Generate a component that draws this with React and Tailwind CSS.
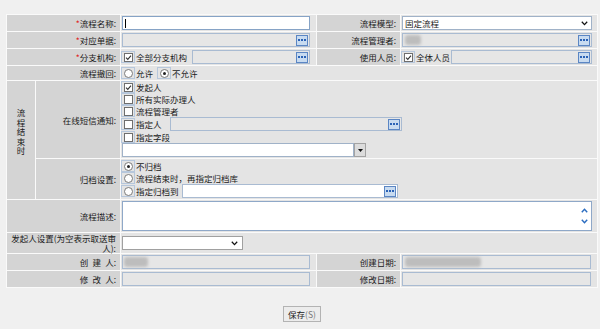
import React from "react";

const Chk = ({ checked }) => (
  <span className="flex h-[12px] w-[14px] shrink-0 items-center justify-center border border-[#b6c7dc]">
    <span className="flex h-[9px] w-[9px] items-center justify-center border border-[#6e6e6e] bg-white">
      {checked && (
        <svg width="7" height="7" viewBox="0 0 7 7">
          <path d="M1 3.6 L2.8 5.4 L6 1.6" stroke="#333" strokeWidth="1.1" fill="none" />
        </svg>
      )}
    </span>
  </span>
);

const Radio = ({ checked }) => (
  <span className="flex h-[12px] w-[14px] shrink-0 items-center justify-center border border-[#b6c7dc]">
    <span className="flex h-[9px] w-[9px] items-center justify-center rounded-full border border-[#7a7a7a] bg-white">
      {checked && <span className="h-[3px] w-[3px] rounded-full bg-[#222]" />}
    </span>
  </span>
);

const Dots = () => (
  <span className="mr-px flex h-[11px] w-[12px] shrink-0 items-center justify-center gap-[1px] border border-[#5b86c4] bg-[#c8dbf0]">
    <span className="h-[2px] w-[2px] bg-[#2a62b6]" />
    <span className="h-[2px] w-[2px] bg-[#2a62b6]" />
    <span className="h-[2px] w-[2px] bg-[#2a62b6]" />
  </span>
);

const Chevron = () => (
  <svg width="7" height="5" viewBox="0 0 7 5" className="shrink-0">
    <path d="M0.8 0.8 L3.5 3.6 L6.2 0.8" stroke="#111" strokeWidth="1.3" fill="none" />
  </svg>
);

const Label = ({ children, className = "" }) => (
  <div className={`flex items-center justify-end bg-[#d4d4d4] pr-[4px] text-right ${className}`}>
    {children}
  </div>
);

const Val = ({ children, className = "" }) => (
  <div className={`flex items-center bg-[#e4e4e4] ${className}`}>{children}</div>
);

const Req = () => <span className="text-[#e02020]">*</span>;

const Lookup = ({ className = "", children }) => (
  <span className={`flex h-[14px] items-center justify-between border border-[#a9bbd2] bg-[#e6e6e6] ${className}`}>
    <span className="flex items-center">{children}</span>
    <Dots />
  </span>
);

const Blob = ({ className = "" }) => (
  <span className={`block h-[10px] rounded-[3px] bg-[#bdbdbd] blur-[1.5px] ${className}`} />
);

export default function App() {
  return (
    <div
      className="min-h-[329px] bg-[#f0f0f0] pl-[6px] pt-[14px] text-[8.5px] leading-[10px] text-[#1a1a1a]"
      style={{ fontFamily: '"Noto Sans CJK SC", "Noto Sans", sans-serif' }}
    >
      <div className="grid w-[592px] grid-cols-[28px_84px_195px_83px_196px] grid-rows-[16px_16px_16px_14px_77px_40px_32px_20px_16px_16px] gap-px border border-[#fafafa] bg-[#fafafa]">
        {/* row 1 */}
        <Label className="col-span-2"><Req />流程名称:</Label>
        <Val>
          <span className="ml-px flex h-[14px] w-[188px] items-center border border-[#86a3c6] bg-white">
            <span className="ml-[2px] h-[9px] w-px bg-black" />
          </span>
        </Val>
        <Label>流程模型:</Label>
        <Val>
          <span className="ml-px flex h-[14px] w-[190px] items-center justify-between border border-[#a0b2c8] bg-white pl-[2px] pr-[3px]">
            <span>固定流程</span>
            <Chevron />
          </span>
        </Val>

        {/* row 2 */}
        <Label className="col-span-2"><Req />对应单据:</Label>
        <Val>
          <Lookup className="ml-px w-[188px]" />
        </Val>
        <Label>流程管理者:</Label>
        <Val>
          <Lookup className="ml-px w-[190px]">
            <Blob className="ml-[2px] w-[16px]" />
          </Lookup>
        </Val>

        {/* row 3 */}
        <Label className="col-span-2"><Req />分支机构:</Label>
        <Val>
          <span className="flex w-[189px] items-center">
            <Chk checked />
            <span className="ml-px">全部分支机构</span>
            <Lookup className="ml-[5px] flex-1" />
          </span>
        </Val>
        <Label>使用人员:</Label>
        <Val>
          <span className="flex w-[191px] items-center">
            <Chk checked />
            <span className="ml-px">全体人员</span>
            <Lookup className="ml-px flex-1" />
          </span>
        </Val>

        {/* row 4 */}
        <Label className="col-span-2">流程撤回:</Label>
        <Val className="col-span-3">
          <Radio />
          <span className="ml-px">允许</span>
          <span className="ml-[4px]" />
          <Radio checked />
          <span className="ml-px">不允许</span>
        </Val>

        {/* rows 5-6 section */}
        <div className="col-start-1 row-span-2 flex items-center justify-center bg-[#d4d4d4] pb-[16px]">
          <span className="w-[9px] break-all text-center leading-[9.5px]">流程结束时</span>
        </div>
        <Label className="col-start-2">在线短信通知:</Label>
        <div className="col-span-3 flex flex-col bg-[#e4e4e4]">
          <span className="flex h-[12px] items-center"><Chk checked /><span className="ml-px">发起人</span></span>
          <span className="flex h-[12px] items-center"><Chk /><span className="ml-px">所有实际办理人</span></span>
          <span className="flex h-[12px] items-center"><Chk /><span className="ml-px">流程管理者</span></span>
          <span className="flex h-[14px] items-center">
            <Chk />
            <span className="ml-px w-[34px]">指定人</span>
            <Lookup className="w-[232px]" />
          </span>
          <span className="flex h-[12px] items-center"><Chk /><span className="ml-px">指定字段</span></span>
          <span className="ml-px flex h-[14px] items-center">
            <span className="h-[14px] w-[232px] border border-[#a0b2c8] bg-white" />
            <span className="flex h-[14px] w-[12px] items-center justify-center border border-[#a3a3a3] bg-[#dcdcdc]">
              <svg width="5" height="3" viewBox="0 0 5 3"><path d="M0 0 H5 L2.5 3 Z" fill="#111" /></svg>
            </span>
          </span>
        </div>

        <Label className="col-start-2">归档设置:</Label>
        <div className="col-span-3 flex flex-col bg-[#e4e4e4] pt-px">
          <span className="flex h-[12px] items-center"><Radio checked /><span className="ml-px">不归档</span></span>
          <span className="flex h-[12px] items-center"><Radio /><span className="ml-px">流程结束时，再指定归档库</span></span>
          <span className="flex h-[14px] items-center">
            <Radio />
            <span className="ml-px w-[46px]">指定归档到</span>
            <span className="flex h-[14px] w-[216px] items-center justify-end border border-[#a9bbd2] bg-white">
              <Dots />
            </span>
          </span>
        </div>

        {/* row 7 */}
        <Label className="col-span-2">流程描述:</Label>
        <Val className="col-span-3">
          <span className="ml-px flex h-[30px] w-[470px] flex-col items-end justify-center gap-[6px] border border-[#8fa8c8] bg-white pr-[3px]">
            <svg width="7" height="5" viewBox="0 0 7 5"><path d="M0.8 4.2 L3.5 1.2 L6.2 4.2" stroke="#2a6cc0" strokeWidth="1.4" fill="none" /></svg>
            <svg width="7" height="5" viewBox="0 0 7 5"><path d="M0.8 0.8 L3.5 3.8 L6.2 0.8" stroke="#2a6cc0" strokeWidth="1.4" fill="none" /></svg>
          </span>
        </Val>

        {/* row 8 */}
        <div className="col-span-2 flex flex-col items-end justify-center bg-[#d4d4d4] pr-[4px] leading-[10px]">
          <span className="whitespace-nowrap">发起人设置(为空表示取送审</span>
          <span className="whitespace-nowrap">人):</span>
        </div>
        <Val className="col-span-3">
          <span className="ml-px flex h-[14px] w-[121px] items-center justify-end border border-[#a0a0a0] bg-white pr-[4px]">
            <Chevron />
          </span>
        </Val>

        {/* row 9 */}
        <Label className="col-span-2">创&ensp;建&ensp;人:</Label>
        <Val>
          <span className="ml-px flex h-[14px] w-[188px] items-center border border-[#a9bbd2] bg-[#e6e6e6]">
            <Blob className="ml-[1px] w-[24px]" />
          </span>
        </Val>
        <Label>创建日期:</Label>
        <Val>
          <span className="ml-px flex h-[14px] w-[189px] items-center border border-[#a9bbd2] bg-[#e6e6e6]">
            <Blob className="ml-[2px] w-[76px]" />
          </span>
        </Val>

        {/* row 10 */}
        <Label className="col-span-2">修&ensp;改&ensp;人:</Label>
        <Val>
          <span className="ml-px h-[14px] w-[188px] border border-[#a9bbd2] bg-[#e6e6e6]" />
        </Val>
        <Label>修改日期:</Label>
        <Val>
          <span className="ml-px h-[14px] w-[189px] border border-[#a9bbd2] bg-[#e6e6e6]" />
        </Val>
      </div>

      <div className="mt-[18px] flex w-[592px] justify-center">
        <button className="flex h-[16px] w-[38px] items-center justify-center border border-[#b3b3b3] bg-[#ececec] text-[8.5px] text-[#222]">
          保存<span className="text-[#777]">(S)</span>
        </button>
      </div>
    </div>
  );
}
